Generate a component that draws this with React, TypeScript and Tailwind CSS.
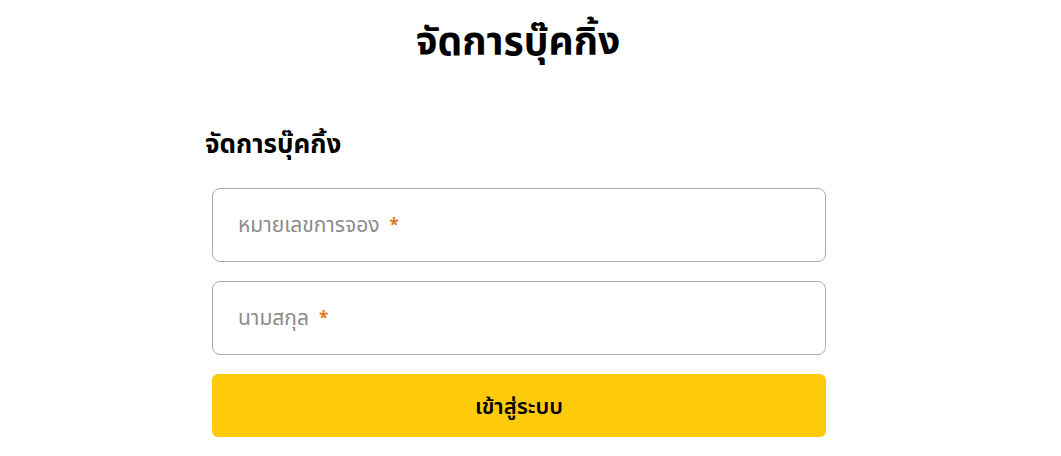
import React from 'react';

const fields = [
    { label: 'หมายเลขการจอง' },
    { label: 'นามสกุล' },
];

const App: React.FC = () => {
    return (
        <div className="min-h-screen bg-white pr-[25px] font-['Noto_Sans','Noto_Sans_Thai',sans-serif]">
            {/* Page title */}
            <h1 className="pt-[14px] text-center text-[39px] font-bold leading-[52px] text-black">จัดการบุ๊คกิ้ง</h1>

            <div className="mx-auto mt-[60px] w-[628px]">
                <h2 className="ml-[1px] text-[26px] font-bold leading-[34px] text-black">จัดการบุ๊คกิ้ง</h2>

                <form className="ml-[8px] mt-[28px] flex w-[614px] flex-col gap-[19px]" onSubmit={(e) => e.preventDefault()}>
                    {fields.map((f) => (
                        <label
                            key={f.label}
                            className="flex h-[74px] items-center rounded-lg border border-[#adadad] bg-white px-[25px]"
                        >
                            <span className="text-[21px] text-[#8c8c8c]">{f.label}</span>
                            <span className="ml-[10px] text-[17px] font-bold text-[#e37b25]">*</span>
                        </label>
                    ))}
                    <button
                        type="submit"
                        className="h-[63px] rounded-md bg-[#fecb0b] text-[22px] font-semibold text-black"
                    >
                        เข้าสู่ระบบ
                    </button>
                </form>
            </div>
        </div>
    );
};

export default App;
